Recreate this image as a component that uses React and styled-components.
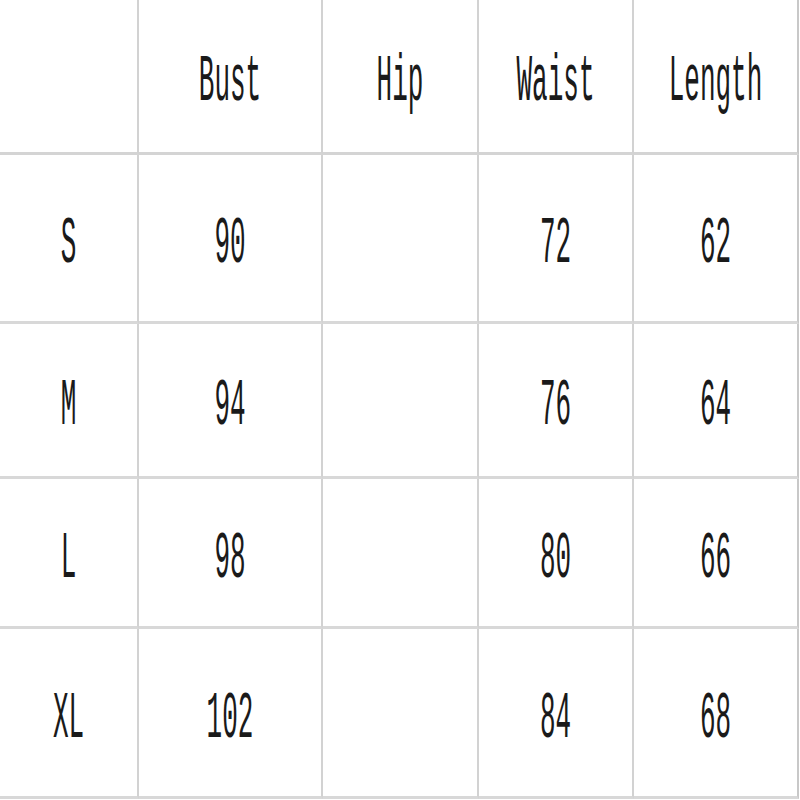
import React from "react";
import styled, { createGlobalStyle } from "styled-components";

const Global = createGlobalStyle`
  html, body { margin: 0; padding: 0; background: #ffffff; }
  body { width: 800px; height: 800px; overflow: hidden; }
`;

const Table = styled.div`
  display: grid;
  grid-template-columns: 139px 184px 156px 155px 165px;
  grid-template-rows: 155px 169px 155px 150px 170px;
  width: 799px;
  background: #fff;
`;

const Cell = styled.div`
  box-sizing: border-box;
  display: flex;
  align-items: center;
  justify-content: center;
  padding-top: ${(p) => (p.$header ? 12 : 12)}px;
  border-right: 2px solid ${(p) => (p.$last ? "#c8c8c8" : "#d2d2d2")};
  border-bottom: 3px solid ${(p) => (p.$header ? "#d4d4d4" : "#d8d8d8")};
`;

const Label = styled.span`
  display: inline-block;
  font-family: "Liberation Mono", "Courier New", monospace;
  font-size: 26px;
  line-height: 1;
  color: #1a1a1a;
  letter-spacing: 0;
  transform: scaleY(2.55);
  transform-origin: center;
`;

const headers = ["", "Bust", "Hip", "Waist", "Length"];
const rows = [
  ["S", "90", "", "72", "62"],
  ["M", "94", "", "76", "64"],
  ["L", "98", "", "80", "66"],
  ["XL", "102", "", "84", "68"],
];

export default function App() {
  return (
    <>
      <Global />
      <Table>
        {headers.map((h, i) => (
          <Cell key={"h" + i} $header $last={i === 4}>
            {h && <Label>{h}</Label>}
          </Cell>
        ))}
        {rows.map((r, ri) =>
          r.map((v, ci) => (
            <Cell key={ri + "-" + ci} $last={ci === 4}>
              {v && <Label>{v}</Label>}
            </Cell>
          ))
        )}
      </Table>
    </>
  );
}
